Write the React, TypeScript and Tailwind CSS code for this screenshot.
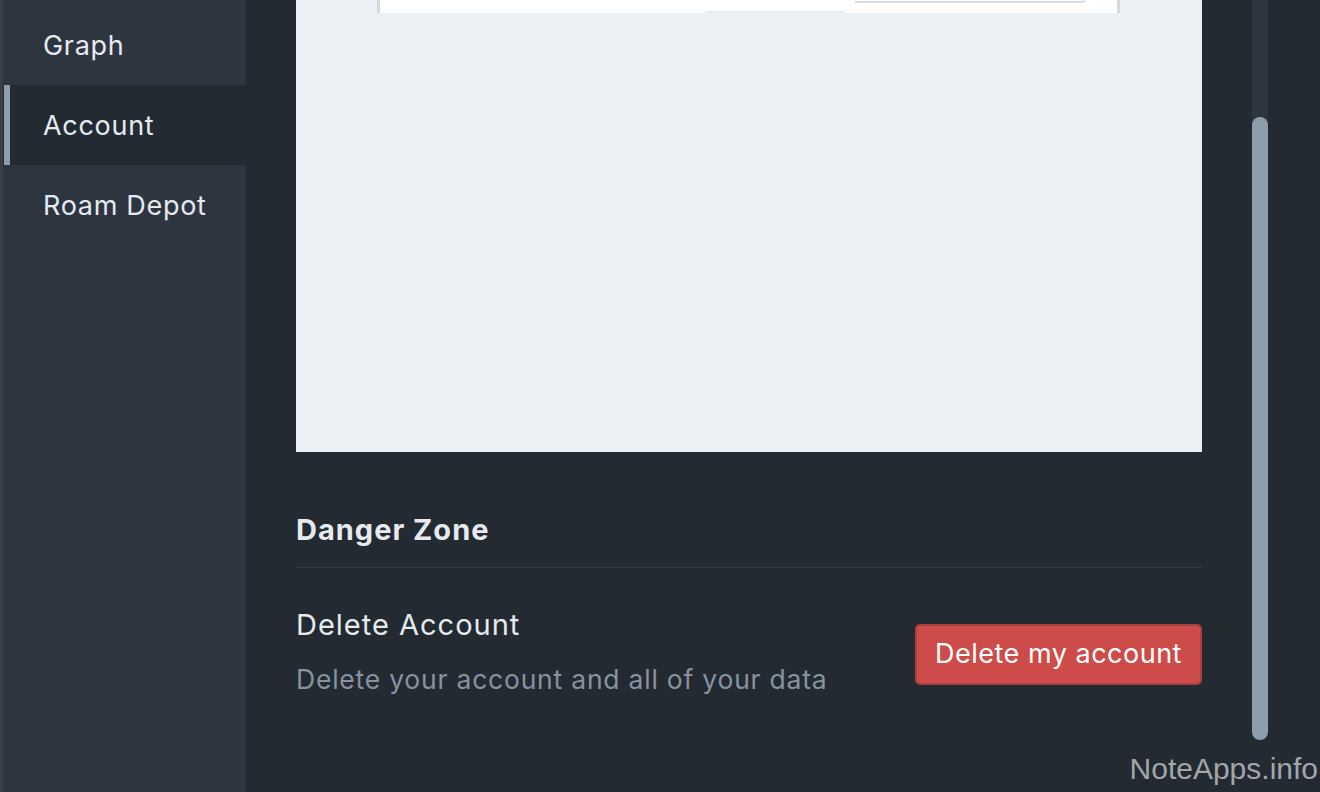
import React from "react";

const navItems = [
    { label: "Graph", active: false },
    { label: "Account", active: true },
    { label: "Roam Depot", active: false },
];

function Sidebar() {
    return (
        <div className="w-[243px] h-full bg-[#2d3640] pt-[5px]">
            {navItems.map((item) => (
                <div
                    key={item.label}
                    className={
                        item.active
                            ? "relative h-[80px] flex items-center pl-[40px] bg-[#232a31]"
                            : "h-[80px] flex items-center pl-[40px]"
                    }
                >
                    {item.active && (
                        <span className="absolute left-[1px] top-0 h-full w-[6px] bg-[#8d9dab]" />
                    )}
                    <span className="text-[27px] tracking-[0.7px] text-[#e6eaef] leading-none">
                        {item.label}
                    </span>
                </div>
            ))}
        </div>
    );
}

function Preview() {
    return (
        <div className="h-[452px] bg-[#ebf0f4] px-[81px]">
            <div className="w-[743px] h-[13px] bg-white border-x-[3px] border-[#d3d9df] relative">
                <div className="absolute left-[475px] top-0 w-[230px] h-[3px] border-b-2 border-r-2 border-[#d5dbe1] rounded-br-[6px]" />
                <div className="absolute left-[325px] top-[11px] w-[140px] h-[2px] bg-[#e8ecef] rounded" />
            </div>
        </div>
    );
}

function DangerZone() {
    return (
        <div>
            <div className="pt-[62px] pb-[21px] border-b border-[#323b45]">
                <h2 className="text-[29px] tracking-[1px] leading-[32px] font-bold text-[#e6eaef]">
                    Danger Zone
                </h2>
            </div>
            <div className="mt-[39px] flex items-center justify-between">
                <div>
                    <p className="text-[29px] tracking-[1px] leading-[36px] text-[#e6eaef]">
                        Delete Account
                    </p>
                    <p className="mt-[20px] text-[26.5px] tracking-[0.78px] leading-[32px] text-[#8793a0]">
                        Delete your account and all of your data
                    </p>
                </div>
                <button className="mt-[6px] h-[61px] w-[287px] rounded-[5px] bg-[#cd4c49] border-2 border-[#a8403d] text-white text-[27px] tracking-[0.5px]">
                    Delete my account
                </button>
            </div>
        </div>
    );
}

function Scrollbar() {
    return (
        <div className="w-[16px] h-[740px] bg-[#2d3640] rounded-b-full flex flex-col justify-end">
            <div className="h-[623px] bg-[#8d9dab] rounded-full" />
        </div>
    );
}

export default function App() {
    return (
        <div
            className="relative w-[1320px] h-[792px] overflow-hidden flex bg-[#232a31]"
            style={{ fontFamily: "Inter, 'Noto Sans', sans-serif" }}
        >
            <div className="w-[3px] h-full bg-[#3a3f46]" />
            <Sidebar />
            <div className="flex-1 flex">
                <div className="ml-[50px] w-[906px]">
                    <Preview />
                    <DangerZone />
                </div>
                <div className="ml-[50px]">
                    <Scrollbar />
                </div>
            </div>
            <div
                className="absolute right-[2px] bottom-[1px] text-[30px] text-[#a2a6ab]"
                style={{ fontFamily: "'Liberation Sans', Arial, sans-serif" }}
            >
                NoteApps.info
            </div>
        </div>
    );
}
